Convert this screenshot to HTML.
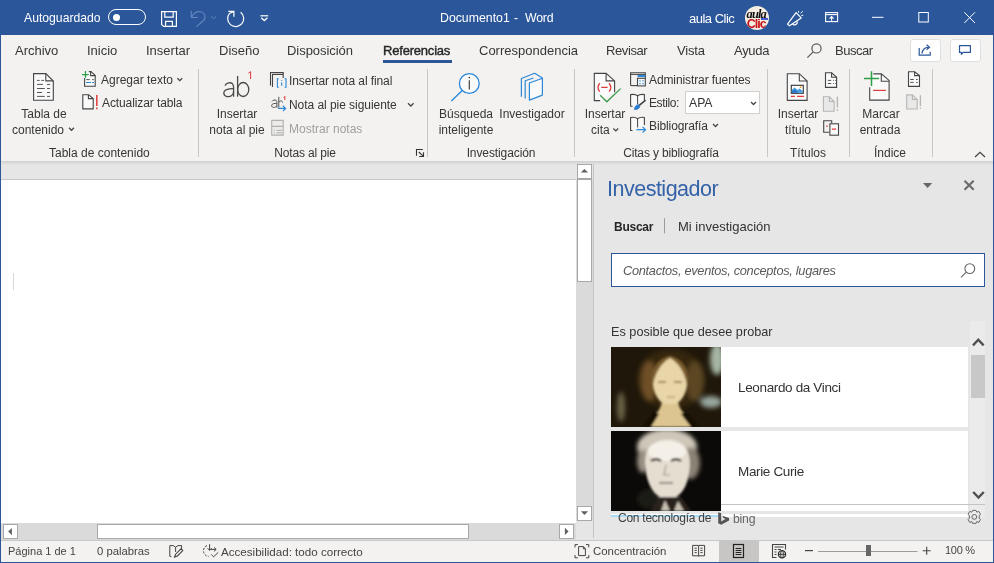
<!DOCTYPE html>
<html><head><meta charset="utf-8">
<style>
*{box-sizing:border-box;margin:0;padding:0}
html,body{width:994px;height:563px;overflow:hidden}
body{position:relative;background:#f3f2f1;font-family:"Liberation Sans",sans-serif;color:#444}
.a{position:absolute;white-space:nowrap}
#title{left:0;top:0;width:994px;height:35px;background:#2b579a;color:#fff}
.tab{position:absolute;top:43px;font-size:13px;color:#363636;line-height:16px;white-space:nowrap}
.rb{position:absolute;font-size:12px;color:#363636;line-height:14px;white-space:nowrap}
.c{text-align:center}
.sep{position:absolute;top:69px;width:1px;height:88px;background:#c8c6c4}
svg{position:absolute;overflow:visible}
body>div{will-change:transform}
</style></head><body>
<!-- title bar -->
<div class="a" id="title"></div>
<div class="a" style="left:24px;top:11px;color:#fff;font-size:12.2px;line-height:15px">Autoguardado</div>
<div class="a" style="left:108px;top:9px;width:38px;height:16px;border:1.3px solid #fff;border-radius:8px"></div>
<div class="a" style="left:112.5px;top:13.5px;width:7px;height:7px;border-radius:50%;background:#fff"></div>
<svg style="left:0;top:0" width="994" height="35" fill="none" stroke="#fff" stroke-width="1.2">
 <!-- save -->
 <path d="M161.6 11.6 H176.4 V26.4 H163.6 L161.6 24.4 Z"/>
 <path d="M164.8 11.6 V17.2 H173.2 V11.6"/>
 <path d="M165.6 26.4 V21.4 H172.4 V26.4"/>
 <!-- undo disabled -->
 <g stroke="#6384bd">
  <path d="M191.3 11 V17.5 H197.8"/>
  <path d="M191.8 17 C194 12.5 198 11 201.5 12 C205.5 13.5 206 18 203.5 20.5 L196.4 26.6"/>
  <path d="M210.8 16.2 L213.5 18.7 L216.3 16.2" stroke-width="1"/>
 </g>
 <!-- redo -->
 <path d="M240.6 12.3 A8 8 0 1 1 229.8 13.2"/>
 <path d="M228.3 11.4 H233.9 V16.8"/>
 <path d="M229.8 13.2 L233.6 11.6"/>
 <!-- customize -->
 <path d="M260.4 15.8 H268.2" />
 <path d="M261.2 17.8 L264.3 20.6 L267.4 17.8" stroke-width="1.3"/>
 <!-- megaphone -->
 <path d="M796.1 12.6 L801.2 17.9 L789.5 25.8 L787.5 24.1 Z" stroke-linejoin="round"/>
 <path d="M792.6 23.6 A2.3 2.3 0 0 0 796.8 21.3"/>
 <path d="M798.6 10.9 V12.6 M800.6 13.4 L802.8 11.2 M801.4 15.4 H803.2" stroke-width="1"/>
 <!-- ribbon display options -->
 <rect x="825.6" y="12.6" width="12" height="9" stroke-width="1.1"/>
 <path d="M825.6 14.6 H837.6" stroke-width="1.1"/>
 <path d="M831.6 20.8 V16.8 M829.6 18.6 L831.6 16.6 L833.6 18.6" stroke-width="1.1"/>
 <!-- minimize -->
 <path d="M872 17.3 H883.5" stroke-width="1"/>
 <!-- maximize -->
 <rect x="918.8" y="12.5" width="9.5" height="9.5" stroke-width="1"/>
 <!-- close -->
 <path d="M964.3 12.3 L975 23 M975 12.3 L964.3 23" stroke-width="1"/>
</svg>
<div class="a" style="left:439.5px;top:10.5px;color:#fff;font-size:12.3px;line-height:15px">Documento1</div>
<div class="a" style="left:513.7px;top:10.5px;color:#fff;font-size:12.3px;line-height:15px">-</div>
<div class="a" style="left:524.6px;top:10.5px;color:#fff;font-size:12.3px;line-height:15px;letter-spacing:-0.2px">Word</div>
<div class="a" style="left:689px;top:11px;color:#fff;font-size:13px;line-height:15px;letter-spacing:-0.5px">aula Clic</div>
<!-- avatar -->
<div class="a" style="left:745px;top:6px;width:24px;height:24px;border-radius:50%;background:#f4ede2;overflow:hidden">
 <div class="a" style="left:1.6px;top:1.5px;font-family:'Liberation Serif',serif;font-style:italic;font-weight:bold;font-size:12.5px;line-height:12px;color:#111;letter-spacing:-0.9px">aula</div>
 <div class="a" style="left:1.8px;top:11.5px;font-family:'Liberation Sans',sans-serif;font-weight:bold;font-size:12.5px;line-height:12px;color:#c8121c;letter-spacing:-1px">Clic</div>
 <div class="a" style="left:16px;top:12.2px;width:7px;height:1.6px;background:#4a55d0"></div>
</div>
<!-- tabs -->
<div class="tab" style="left:15px">Archivo</div>
<div class="tab" style="left:87.2px">Inicio</div>
<div class="tab" style="left:146.2px">Insertar</div>
<div class="tab" style="left:219.2px">Diseño</div>
<div class="tab" style="left:287.4px;letter-spacing:-0.05px">Disposición</div>
<div class="tab" style="left:383px;letter-spacing:-0.2px;color:#262626;-webkit-text-stroke:0.4px #262626">Referencias</div>
<div class="a" style="left:383px;top:60px;width:69px;height:3px;background:#2b579a"></div>
<div class="tab" style="left:479px">Correspondencia</div>
<div class="tab" style="left:606.3px;letter-spacing:-0.4px">Revisar</div>
<div class="tab" style="left:676.8px;letter-spacing:-0.2px">Vista</div>
<div class="tab" style="left:734px;letter-spacing:-0.3px">Ayuda</div>
<div class="tab" style="left:835px;letter-spacing:-0.5px">Buscar</div>
<svg style="left:0;top:35px" width="994" height="30" fill="none" stroke="#555" stroke-width="1.2">
 <circle cx="816.5" cy="13.4" r="4.6"/>
 <path d="M813.2 16.8 L807.4 22.6"/>
</svg>
<div class="a" style="left:909.5px;top:38.5px;width:31px;height:23px;background:#fff;border:1px solid #e1dfdd;border-radius:3px"></div>
<div class="a" style="left:949.5px;top:38.5px;width:31px;height:23px;background:#fff;border:1px solid #e1dfdd;border-radius:3px"></div>
<svg style="left:0;top:35px" width="994" height="30" fill="none" stroke="#2b579a" stroke-width="1.2">
 <path d="M919.2 13 V20.2 H930.2 V16.8"/>
 <path d="M922 18.5 C922.5 14 925 12.3 928.5 12.3"/>
 <path d="M926.6 9.8 L929.5 12.3 L926.6 14.8"/>
 <path d="M959.5 10.6 H970.4 V17.4 H963 L961.4 19.4 V17.4 H959.5 Z" stroke-linejoin="round"/>
</svg>
<!-- ribbon texts -->
<div class="rb c" style="left:-6px;width:100px;top:107px">Tabla de</div>
<div class="rb c" style="left:-12px;width:100px;top:122.5px">contenido</div>
<div class="rb c" style="left:49px;width:100px;top:145.5px">Tabla de contenido</div>
<div class="rb" style="left:101px;top:72.5px">Agregar texto</div>
<div class="rb" style="left:101.5px;top:95.5px;letter-spacing:-0.1px">Actualizar tabla</div>

<div class="rb c" style="left:186.7px;width:100px;top:107px">Insertar</div>
<div class="rb c" style="left:186.9px;width:100px;top:122.5px">nota al pie</div>
<div class="rb c" style="left:254.5px;width:100px;top:145.5px;letter-spacing:-0.15px">Notas al pie</div>
<div class="rb" style="left:289.4px;top:73.5px;letter-spacing:-0.1px">Insertar nota al final</div>
<div class="rb" style="left:289.4px;top:97.5px;letter-spacing:-0.05px">Nota al pie siguiente</div>
<div class="rb" style="left:289.4px;top:121.5px;color:#a19f9d">Mostrar notas</div>

<div class="rb c" style="left:416.3px;width:100px;top:107px">Búsqueda</div>
<div class="rb c" style="left:416.2px;width:100px;top:122.5px">inteligente</div>
<div class="rb c" style="left:481.8px;width:100px;top:107px">Investigador</div>
<div class="rb c" style="left:450.8px;width:100px;top:145.5px;letter-spacing:-0.1px">Investigación</div>

<div class="rb c" style="left:554.7px;width:100px;top:107px">Insertar</div>
<div class="rb" style="left:591px;top:122.5px">cita</div>
<div class="rb c" style="left:621.1px;width:100px;top:145.5px;letter-spacing:-0.15px">Citas y bibliografía</div>
<div class="rb" style="left:649.4px;top:73px;letter-spacing:-0.1px">Administrar fuentes</div>
<div class="rb" style="left:649px;top:95.7px;letter-spacing:-0.4px">Estilo:</div>
<div class="a" style="left:685px;top:91px;width:75px;height:23px;background:#fff;border:1px solid #d2d0ce"></div>
<div class="rb" style="left:688.7px;top:95.7px;color:#333;font-size:12.2px">APA</div>
<div class="rb" style="left:649px;top:118.7px;letter-spacing:-0.1px">Bibliografía</div>

<div class="rb c" style="left:747.5px;width:100px;top:107px">Insertar</div>
<div class="rb c" style="left:747.6px;width:100px;top:122.5px">título</div>
<div class="rb c" style="left:758.2px;width:100px;top:145.5px">Títulos</div>
<div class="rb c" style="left:830.8px;width:100px;top:107px">Marcar</div>
<div class="rb c" style="left:829.9px;width:100px;top:122.5px">entrada</div>
<div class="rb c" style="left:840.3px;width:100px;top:145.5px">Índice</div>

<!-- separators -->
<div class="sep" style="left:198px"></div>
<div class="sep" style="left:427px"></div>
<div class="sep" style="left:574px"></div>
<div class="sep" style="left:767px"></div>
<div class="sep" style="left:849px"></div>
<div class="sep" style="left:932px"></div>

<!-- ribbon icons -->
<svg style="left:0;top:0" width="994" height="170" fill="none" stroke="#444" stroke-width="1.1">
 <!-- chevrons -->
 <g stroke="#444" stroke-width="1.25">
  <path d="M69 127.8 L71.5 130.3 L74 127.8"/>
  <path d="M177.4 78.2 L179.8 80.7 L182.2 78.2"/>
  <path d="M408 103.2 L410.8 106 L413.6 103.2"/>
  <path d="M613.4 128.5 L615.8 130.9 L618.2 128.5"/>
  <path d="M751 102 L753.5 104.5 L756 102"/>
  <path d="M713 124 L715.5 126.5 L718 124"/>
  <path d="M975 157 L980 152.4 L985 157"/>
 </g>
 <!-- dialog launcher -->
 <path d="M416.5 155.8 V149.5 H422.8 M418.8 152 L423.2 156.2 M419.2 156.5 H423.5 V152.2" stroke="#333" stroke-width="1.1"/>

 <!-- TOC big icon -->
 <path d="M33.6 73.6 H45.8 L53.3 81 V100.3 H33.6 Z" fill="#fafafa" stroke-linejoin="miter"/>
 <path d="M45.8 73.6 V80.9 H53.3" />
 <g stroke="#555" stroke-width="1">
  <path d="M37 80.4 H39.7 M41.3 80.4 H44 M37 84.4 H42.9 M47 84.4 H50.1 M37 88.5 H44.8 M47 88.5 H50.1 M37 92.5 H42.1 M47 92.5 H50.1 M37 96.4 H44.8 M47 96.4 H50.1"/>
 </g>
 <!-- Agregar texto small icon -->
 <path d="M84.6 78 V86.3 H95.2 V75.4 L91 71.6 H88.8" fill="#fafafa"/>
 <path d="M90.6 71.6 V75.6 H95.2" />
 <path d="M82 74.6 H88.8 M85.5 71.1 V77.8" stroke="#2e9e47" stroke-width="1.3"/>
 <path d="M86.2 79.6 H89.8 M92.1 79.6 H93.8" stroke="#555" stroke-width="1"/>
 <path d="M86 82.5 H91 M92.1 82.5 H94" stroke="#2b88d8" stroke-width="1.2"/>
 <!-- Actualizar tabla small icon -->
 <path d="M82.8 94.7 H88.6 L93.2 98.6 V108.9 H82.8 Z" fill="#fafafa"/>
 <path d="M88.4 94.7 V98.6 H93.2"/>
 <path d="M96.8 95 V106" stroke="#e23b3b" stroke-width="1.5"/>
 <path d="M96.8 107.6 V109.2" stroke="#e23b3b" stroke-width="1.5"/>

 <!-- ab big -->
 <g stroke="#4a4a4a" stroke-width="1.3">
  <path d="M225 85.6 C226.5 82.8 230.5 82 232.3 83.6 C233.3 84.6 233.6 85.8 233.6 87.6 V96.7"/>
  <path d="M233.6 88.6 C229.5 88.6 223.8 89 223.8 93 C223.8 97.2 229.5 97.3 231.6 95.6 C233 94.4 233.6 93 233.6 91.4"/>
  <path d="M237.6 75.9 V96.7"/>
  <ellipse cx="243.2" cy="89.5" rx="5.6" ry="7"/>
 </g>
 <path d="M248.4 73.2 L250.6 71.6 V79" stroke="#e23b3b" stroke-width="1"/>

 <!-- Insertar nota al final -->
 <path d="M270.5 85.4 V72.5 H283.2 V74" stroke="#444" stroke-width="1.1"/>
 <path d="M272.5 87 V74.4 H283.2 V78" stroke="#444" stroke-width="1.1"/>
 <path d="M278.8 78.8 H277.4 V87.2 H278.8 M284.6 78.8 H286 V87.2 H284.6" stroke="#2b88d8" stroke-width="1.1"/>
 <path d="M281.7 80.3 V80.9 M281.7 82.5 V85.8" stroke="#2b88d8" stroke-width="1.2"/>
 <!-- Nota al pie siguiente -->
 <g stroke="#505050" stroke-width="1">
  <path d="M272 101.4 C272.8 100 275 99.6 276.2 100.4 C276.8 101 276.9 101.6 276.9 102.4 V107.6 M276.9 103.4 C274.7 103.4 271.6 103.4 271.6 105.6 C271.6 108 275.2 107.8 276.9 106"/>
  <path d="M278.8 96.8 V107.6 M278.8 102.2 C280 100.4 282.5 100.4 282.5 102.6"/>
 </g>
 <path d="M283.8 97.6 L284.8 96.4 V100" stroke="#e23b3b" stroke-width="1"/>
 <path d="M277.8 108.4 H285.6 M282.9 105.8 L285.6 108.4 L282.9 111" stroke="#2b88d8" stroke-width="1.2"/>
 <!-- Mostrar notas -->
 <path d="M271.7 120.4 H283.2 V135.1 H271.7 Z M271.7 126.4 H283.2" stroke="#b3b0ad" stroke-width="1.1" fill="#ebebeb"/>
 <path d="M273.8 130.4 H274.8 M276.4 130.4 H282 M273.8 132.8 H274.8 M276.4 132.8 H282" stroke="#b3b0ad" stroke-width="1"/>

 <!-- Busqueda inteligente -->
 <circle cx="469.3" cy="83.5" r="9.9" stroke="#2b88d8" stroke-width="1.3" fill="#fafafa"/>
 <path d="M462.2 90.6 L451.4 101.1" stroke="#2b88d8" stroke-width="1.4"/>
 <path d="M469.3 80.2 V89.6" stroke="#333" stroke-width="1.1"/>
 <circle cx="469.3" cy="77.6" r="0.8" fill="#333" stroke="none"/>
 <!-- Investigador books -->
 <g stroke="#2b88d8" stroke-width="1.2" stroke-linejoin="round">
  <path d="M521.4 96.8 V78.5 L534.6 73.3 L542.4 78"/>
  <path d="M525.2 98.4 V80.8 L533.5 78"/>
  <path d="M529.4 100.1 V83 L542.4 78.3 V95.1 Z" fill="#fafafa"/>
 </g>

 <!-- Insertar cita -->
 <path d="M600.1 100.6 H594.3 V73.4 H606.1 L614.6 80.9 V92.2" fill="#fafafa" stroke="#444"/>
 <path d="M606.1 73.4 V80.9 H614.6"/>
 <path d="M599.8 83.3 C597.6 85.8 597.6 89.2 599.8 91.6 M609 83.3 C611.2 85.8 611.2 89.2 609 91.6 M601.3 87.4 H607.6" stroke="#e23b3b" stroke-width="1.3"/>
 <path d="M600.2 95.3 L606.8 101.8 L620.6 88.6" stroke="#3a9a4a" stroke-width="1.3"/>
 <!-- Administrar fuentes -->
 <path d="M630.6 85.6 V72.7 H645.3 V78" stroke="#444" stroke-width="1.1"/>
 <path d="M630.6 74.4 H645.3" stroke="#444" stroke-width="1"/>
 <path d="M637.6 76 H645.3" stroke="#2b88d8" stroke-width="2"/>
 <path d="M630.6 85.6 H637" stroke="#444" stroke-width="1.1"/>
 <rect x="637.5" y="78.3" width="7.8" height="7.6" stroke="#444" stroke-width="1.1" fill="#fafafa"/>
 <path d="M639.4 80.8 H640.6 M642.3 80.8 H643.6 M639.4 83.6 H640.6 M642.3 83.6 H643.6" stroke="#2b88d8" stroke-width="1.3"/>
 <!-- Estilo book -->
 <path d="M632.6 106.2 H630.6 V94.6 C633 94.2 636 94.6 637.6 95.8 C639.2 94.6 642 94.2 644.4 94.6 V100.6" stroke="#444" stroke-width="1.1" fill="#fafafa"/>
 <path d="M637.6 95.8 V104" stroke="#444" stroke-width="1"/>
 <path d="M634.4 109.5 C634.8 106.6 636.2 105 638.2 104.6 L640 106.4 C639.6 108.4 637.2 109.6 634.4 109.5 Z" fill="#2b7cd3" stroke="#2b7cd3" stroke-width="0.8"/>
 <path d="M639.2 105.4 L645.6 100.2" stroke="#444" stroke-width="1.6"/>
 <!-- Bibliografia book -->
 <path d="M632.6 130.5 H630.6 V117.5 C633 117.1 636 117.5 637.6 118.7 C639.2 117.5 642 117.1 644.4 117.5 V125" stroke="#444" stroke-width="1.1" fill="#fafafa"/>
 <path d="M637.6 118.7 V127.5" stroke="#444" stroke-width="1"/>
 <path d="M636.4 129.7 H645.4 M642.6 126.8 L645.5 129.7 L642.6 132.6" stroke="#2b88d8" stroke-width="1.2"/>

 <!-- Insertar titulo big -->
 <path d="M787.3 73.7 H799.3 L807.1 81 V100.4 H787.3 Z" fill="#fafafa"/>
 <path d="M799.3 73.7 V81 H807.1"/>
 <rect x="791.3" y="85.3" width="12" height="8" stroke="#333" stroke-width="1.1" fill="#fff"/>
 <path d="M791.8 92.8 V89.8 L794.6 87.4 L797.6 90 L799.6 88.6 L802.8 91 V92.8 Z" fill="#4a9ee0" stroke="none"/>
 <path d="M791.8 92.8 V91.4 L795 89.6 L798.4 92.8 Z" fill="#2a70c0" stroke="none"/>
 <circle cx="800.6" cy="87.2" r="0.9" fill="#f0a030" stroke="none"/>
 <path d="M790.9 96.4 H794.9 M797.1 96.4 H803.9" stroke="#e23b3b" stroke-width="1.1"/>
 <!-- small titulos icons -->
 <path d="M825.5 72.8 H831.6 L836.6 77.3 V87.4 H825.5 Z" fill="#fafafa"/>
 <path d="M831.6 72.8 V77.3 H836.6"/>
 <path d="M827.8 80.4 H831.2 M833 80.4 H833.8 M835 80.4 H835.8 M827.8 83.5 H831.2 M833 83.5 H833.8 M835 83.5 H835.8" stroke="#555" stroke-width="1"/>
 <path d="M823.4 96.8 H829.4 L834.2 101.5 V111.2 H823.4 Z" fill="#e8e8e8" stroke="#b8b6b4"/>
 <path d="M829.4 96.8 V101.5 H834.2" stroke="#b8b6b4"/>
 <path d="M837.4 96.5 V107.5 M837.4 109.2 V111" stroke="#b8b6b4" stroke-width="1.4"/>
 <path d="M829 132.2 H823.7 V120.7 H831.7 V123" fill="none"/>
 <rect x="829.9" y="123.8" width="8.6" height="11.4" fill="#fafafa"/>
 <path d="M826.2 126.1 H827.8 M831.9 129.1 H836.1" stroke="#e23b3b" stroke-width="1.1"/>

 <!-- Marcar entrada big -->
 <path d="M873.3 73.9 H881.3 L889.1 80.4 V100.1 H869.7 V87.3" fill="#fafafa"/>
 <path d="M881.3 73.9 V81.3 H889.1"/>
 <path d="M864 78.4 H879.1 M871.5 71.2 V86" stroke="#2e9e47" stroke-width="1.5"/>
 <path d="M873.1 90.4 H885.9" stroke="#e23b3b" stroke-width="1.2"/>
 <!-- small indice icons -->
 <path d="M908.5 71.7 H914.6 L919.5 75.6 V86.4 H908.5 Z" fill="#fafafa"/>
 <path d="M914.6 71.7 V75.6 H919.5"/>
 <path d="M910.2 79.5 H913.7 M916 79.5 H917.7 M910.2 82.4 H913.7 M916 82.4 H917.7" stroke="#555" stroke-width="1"/>
 <path d="M906.7 94.9 H912.4 L917.2 99.4 V109 H906.7 Z" fill="#e8e8e8" stroke="#b8b6b4"/>
 <path d="M912.4 94.9 V99.4 H917.2" stroke="#b8b6b4"/>
 <path d="M920.4 95.3 V106 M920.4 107.4 V108.8" stroke="#b8b6b4" stroke-width="1.4"/>
</svg>
<!-- doc area -->
<div class="a" style="left:0;top:161px;width:994px;height:379px;background:#e6e6e6"></div>
<div class="a" style="left:0;top:161px;width:994px;height:4px;background:linear-gradient(#cfcfcf,#e6e6e6)"></div>
<div class="a" style="left:0;top:179px;width:576px;height:1px;background:#c8c8c8"></div>
<div class="a" style="left:0;top:180px;width:576px;height:343px;background:#fff"></div>
<div class="a" style="left:13px;top:273px;width:1px;height:17px;background:#d8d8d8"></div>
<!-- vertical scrollbar -->
<div class="a" style="left:576px;top:179px;width:17px;height:342px;background:#dadada"></div>
<div class="a" style="left:577px;top:164px;width:15px;height:15px;background:#fff;border:1px solid #a8a8a8"></div>
<div class="a" style="left:577px;top:178.5px;width:15px;height:102.5px;background:#fff;border:1.5px solid #a8a8a8"></div>
<div class="a" style="left:577px;top:506px;width:15px;height:15px;background:#fff;border:1px solid #a8a8a8"></div>
<div class="a" style="left:593px;top:164px;width:1px;height:374px;background:#c4c4c4"></div>
<!-- horizontal scrollbar -->
<div class="a" style="left:1px;top:523px;width:575px;height:17px;background:#dadada"></div>
<div class="a" style="left:3px;top:524px;width:15px;height:15px;background:#fff;border:1px solid #a8a8a8"></div>
<div class="a" style="left:97px;top:524px;width:372px;height:15px;background:#fff;border:1.3px solid #a8a8a8"></div>
<div class="a" style="left:559px;top:524px;width:15px;height:15px;background:#fff;border:1px solid #a8a8a8"></div>
<svg style="left:0;top:0" width="994" height="563" stroke="none" fill="#606060">
 <path d="M584.4 168.9 L588.1 172.6 H580.9 Z"/>
 <path d="M580.9 511.3 H588.1 L584.4 515 Z"/>
 <path d="M8.2 531.6 L11.9 527.9 V535.3 Z"/>
 <path d="M568.6 531.4 L564.9 527.7 V535.1 Z"/>
</svg>
<!-- panel -->
<div class="a" style="left:607.3px;top:176.8px;font-size:21.5px;line-height:24px;color:#3462a8;letter-spacing:-0.5px">Investigador</div>
<svg style="left:0;top:0" width="994" height="563" fill="none">
 <path d="M923 183 H932.2 L927.6 188 Z" fill="#666"/>
 <path d="M964.5 180.8 L973.7 189.8 M973.7 180.8 L964.5 189.8" stroke="#6a6a6a" stroke-width="2.1"/>
 <path d="M664.5 218.3 V233.4" stroke="#9a9a9a" stroke-width="1"/>
</svg>
<div class="a" style="left:613.5px;top:220px;font-size:12px;line-height:14px;font-weight:bold;color:#262626;letter-spacing:-0.25px">Buscar</div>
<div class="a" style="left:677.9px;top:218.5px;font-size:13px;line-height:15px;color:#333">Mi investigación</div>
<div class="a" style="left:611px;top:252.5px;width:374px;height:33.5px;background:#fff;border:1.2px solid #2b579a"></div>
<div class="a" style="left:622.5px;top:262.5px;font-size:12.8px;line-height:15px;font-style:italic;color:#5a5a5a;letter-spacing:-0.3px">Contactos, eventos, conceptos, lugares</div>
<svg style="left:0;top:0" width="994" height="563" fill="none" stroke="#666" stroke-width="1.1">
 <circle cx="969.8" cy="268.6" r="4.9"/>
 <path d="M966.2 272.2 L961 277.4"/>
</svg>
<div class="a" style="left:611px;top:324.5px;font-size:12.7px;line-height:14px;color:#333">Es posible que desee probar</div>
<!-- list -->
<div class="a" style="left:970px;top:321px;width:15px;height:196px;background:#ebebeb"></div>
<div class="a" style="left:971px;top:355px;width:14px;height:42.5px;background:#c8c8c8"></div>
<svg style="left:0;top:0" width="994" height="563" fill="none" stroke="#505050" stroke-width="2.4">
 <path d="M973 345.4 L978.3 339.8 L983.6 345.4"/>
 <path d="M973.2 492 L978.5 497.6 L983.8 492"/>
</svg>
<div class="a" style="left:611px;top:347px;width:357px;height:80px;background:#fff"></div>
<div class="a" style="left:611px;top:430.5px;width:357px;height:74px;background:#fff"></div>
<div class="a" style="left:611px;top:504px;width:374px;height:1px;background:#c4c4c4"></div>
<div class="a" style="left:611px;top:505px;width:357px;height:6px;background:#fff"></div>
<div class="a" style="left:611px;top:514.4px;width:357px;height:2.6px;background:#fff"></div>
<div class="a" style="left:737.5px;top:380px;font-size:13.5px;line-height:15px;color:#333;letter-spacing:-0.35px">Leonardo da Vinci</div>
<div class="a" style="left:737.5px;top:463.8px;font-size:13.5px;line-height:15px;color:#333;letter-spacing:-0.35px">Marie Curie</div>
<!-- portraits -->
<svg style="left:611px;top:347px" width="110" height="80" viewBox="0 0 110 80">
 <defs>
  <filter id="b1" x="-30%" y="-30%" width="160%" height="160%"><feGaussianBlur stdDeviation="2.5"/></filter>
  <filter id="b2" x="-30%" y="-30%" width="160%" height="160%"><feGaussianBlur stdDeviation="0.9"/></filter>
  <clipPath id="c1"><rect width="110" height="80"/></clipPath>
 </defs>
 <g clip-path="url(#c1)">
 <rect width="110" height="80" fill="#1f170a"/>
 <g filter="url(#b1)">
  <ellipse cx="106" cy="12" rx="7" ry="16" fill="#a6b6a4"/>
  <ellipse cx="100" cy="55" rx="11" ry="6" fill="#98a69e"/>
  <ellipse cx="10" cy="60" rx="4" ry="15" fill="#6c6648"/>
  <ellipse cx="60" cy="32" rx="34" ry="30" fill="#36260f"/>
  <ellipse cx="84" cy="34" rx="9" ry="20" fill="#5c4622"/>
  <ellipse cx="38" cy="34" rx="8" ry="20" fill="#6e5026"/>
 </g>
 <g filter="url(#b2)">
  <path d="M51 54 H67 C68 62 72 66 80 72 L86 80 H34 L40 72 C46 66 50 62 51 54 Z" fill="#dcc590"/>
  <path d="M32 80 L44 65 L48 67 L40 80 Z M88 80 L74 65 L70 67 L80 80 Z" fill="#120c04"/>
  <path d="M59 9 C52 11 44 16 42 26 C40 38 44 50 50 55 C54 58 64 58 68 55 C74 50 78 38 76 26 C74 16 66 11 59 9 Z" fill="#e8d5a8"/>
  <path d="M59 9 C52 10 44 15 42 26 C41 30 41 34 42 38 C44 26 50 16 59 11 Z" fill="#7a5a2c"/>
  <path d="M59 9 C66 10 74 15 76 26 C77 30 77 34 76 38 C74 26 68 16 59 11 Z" fill="#7a5a2c"/>
  <path d="M47 35 H55 M63 35 H71" stroke="#8a6c40" stroke-width="1.3"/>
  <path d="M56 50 H64" stroke="#a88a5a" stroke-width="1"/>
 </g>
 </g>
</svg>
<svg style="left:611px;top:430.5px" width="110" height="80" viewBox="0 0 110 80">
 <defs>
  <filter id="b3" x="-30%" y="-30%" width="160%" height="160%"><feGaussianBlur stdDeviation="2.2"/></filter>
  <filter id="b4" x="-30%" y="-30%" width="160%" height="160%"><feGaussianBlur stdDeviation="0.9"/></filter>
  <clipPath id="c2"><rect width="110" height="80"/></clipPath>
 </defs>
 <g clip-path="url(#c2)">
 <rect width="110" height="80" fill="#0c0a08"/>
 <g filter="url(#b3)">
  <ellipse cx="56" cy="16" rx="30" ry="18" fill="#cfc8ba"/>
  <ellipse cx="80" cy="32" rx="9" ry="16" fill="#8a8274"/>
  <ellipse cx="32" cy="30" rx="6" ry="12" fill="#9a9284"/>
  <ellipse cx="40" cy="68" rx="14" ry="10" fill="#1e1a16"/>
 </g>
 <g filter="url(#b4)">
  <path d="M34 32 C34 16 44 8 57 8 C70 8 80 18 79 34 C78 54 70 68 57 68 C44 68 35 54 34 32 Z" fill="#e4ddd0"/>
  <ellipse cx="56" cy="20" rx="19" ry="10" fill="#f4f0e8"/>
  <path d="M40 30 C43 28 47 28 50 30 M60 30 C63 28 67 28 70 30" stroke="#3a332a" stroke-width="2.4" fill="none"/>
  <path d="M55 34 L53 44 H59" stroke="#a0968a" stroke-width="1.2" fill="none"/>
  <path d="M48 52 H62" stroke="#7a7062" stroke-width="1.6"/>
  <path d="M40 80 L47 66 H70 L80 80 Z" fill="#2a241e"/>
  <path d="M50 80 L54 69 L59 80 Z M63 80 L67 70 L73 80 Z" fill="#c8c0b2"/>
 </g>
 </g>
</svg>
<div class="a" style="left:611px;top:515px;width:110px;height:1.5px;background:#a8dcf4"></div>
<div class="a" style="left:617.5px;top:511px;font-size:12px;line-height:14px;color:#3e3e3e;letter-spacing:-0.25px">Con tecnología de</div>
<svg style="left:0;top:0" width="994" height="563">
 <path d="M718.2 512.2 L721.2 513.2 V521.4 L725.4 519 L723.2 517.8 L722.2 515.8 L729.1 518.1 V520.6 L721.2 524.8 L718.2 523.2 Z" fill="#555"/>
 <g fill="none" stroke="#666" stroke-width="1">
  <circle cx="974.3" cy="516.9" r="2.4"/>
  <path d="M972.6 510.4 H976 L976.8 512.2 L978.8 511.4 L980.5 514.2 L979.2 515.8 V518 L980.5 519.6 L978.8 522.4 L976.8 521.6 L976 523.4 H972.6 L971.8 521.6 L969.8 522.4 L968.1 519.6 L969.4 518 V515.8 L968.1 514.2 L969.8 511.4 L971.8 512.2 Z" stroke-linejoin="round"/>
 </g>
</svg>
<div class="a" style="left:732.6px;top:511.5px;font-size:12.2px;line-height:14px;color:#666;letter-spacing:-0.2px">bing</div>
<!-- status bar -->
<div class="a" style="left:0;top:540px;width:994px;height:1px;background:#c8c8c8"></div>
<div class="a" style="left:0;top:541px;width:994px;height:22px;background:#f3f2f1"></div>
<div class="a" style="left:719px;top:541px;width:40px;height:21px;background:#c8c6c4"></div>
<div class="a" style="left:8px;top:545px;font-size:11px;line-height:13px;color:#444">Página 1 de 1</div>
<div class="a" style="left:96.6px;top:545px;font-size:11.3px;line-height:13px;color:#444">0 palabras</div>
<div class="a" style="left:221.3px;top:545px;font-size:11.6px;line-height:13px;color:#444">Accesibilidad: todo correcto</div>
<div class="a" style="left:592.7px;top:545px;font-size:11.4px;line-height:13px;color:#444">Concentración</div>
<div class="a" style="left:944.5px;top:544px;font-size:11px;line-height:13px;color:#444;letter-spacing:-0.3px">100 %</div>
<svg style="left:0;top:0" width="994" height="563" fill="none" stroke="#444" stroke-width="1">
 <!-- proofing -->
 <path d="M171.4 556.4 H169.8 V545.6 H173.2 L175.6 547.2 L178 545.6 H181.6 V549.4"/>
 <path d="M175.6 547.2 V552"/>
 <path d="M174.6 557 L175.6 554.2 L181 548.8 L182.8 550.6 L177.4 556 Z" stroke-width="1.1"/>
 <!-- accessibility -->
 <path d="M207 545.6 A5.6 5.6 0 0 0 208.6 556.4" stroke-dasharray="2.2 1.3"/>
 <path d="M209.6 544.2 V550.2 M207.6 548.2 L209.6 550.4 L211.6 548.2" />
 <path d="M210.6 549.4 H216 M214 547.4 L216.2 549.4 L214 551.4"/>
 <path d="M211.2 554.4 L213.6 556.8 L218.2 552.4"/>
 <!-- focus -->
 <path d="M575 547.4 V544.6 H577.8 M586 544.6 H588.8 V547.4 M588.8 555 V557.8 H586 M577.8 557.8 H575 V555"/>
 <path d="M578.6 555.6 V546.6 H583.4 L585.4 548.6 V555.6 Z"/>
 <path d="M583.4 546.6 V548.8 H585.4"/>
 <!-- read mode -->
 <path d="M692.6 545.4 H698.2 L698.6 546 L699 545.4 H704.6 V555.8 H699 L698.6 556.4 L698.2 555.8 H692.6 Z"/>
 <path d="M698.6 546 V555.8"/>
 <path d="M694.6 548.2 H696.8 M694.6 550.4 H696.8 M694.6 552.6 H696.8 M700.4 548.2 H702.6 M700.4 550.4 H702.6 M700.4 552.6 H702.6"/>
 <!-- print layout -->
 <rect x="733.5" y="544.5" width="10" height="13" stroke="#222" stroke-width="1.2"/>
 <path d="M735.6 548.5 H741.4 M735.6 550.5 H741.4 M735.6 552.5 H741.4 M735.6 554.5 H741.4" stroke="#222" stroke-width="1"/>
 <!-- web layout -->
 <path d="M776.5 557.5 H772.5 V544.5 H785.5 V549.5" stroke-width="1.1"/>
 <path d="M774.5 547 H783.5 M774.5 549.5 H776.5 M777.8 549.5 H781 M774.5 552 H776.5 M774.5 554.5 H776.5" stroke-width="1"/>
 <circle cx="782" cy="554.3" r="3.6" fill="#f3f2f1" stroke="#333" stroke-width="1.3"/>
 <path d="M778.6 554.3 H785.4" stroke="#333" stroke-width="1"/>
 <ellipse cx="782" cy="554.3" rx="1.4" ry="3.6" stroke="#333" stroke-width="0.9"/>
 <!-- zoom -->
 <path d="M805 550.6 H813" stroke="#444" stroke-width="1.2"/>
 <path d="M818 551.5 H917.5" stroke="#9b9b9b" stroke-width="1"/>
 <rect x="866" y="545" width="5" height="11" fill="#666" stroke="none"/>
 <path d="M922.7 550.8 H930.7 M926.7 546.8 V554.8" stroke="#444" stroke-width="1.1"/>
</svg>
<!-- window border -->
<div class="a" style="left:0;top:0;width:1px;height:563px;background:#2b579a"></div>
<div class="a" style="left:993px;top:0;width:1px;height:563px;background:#2b579a"></div>
<div class="a" style="left:0;top:562px;width:994px;height:1px;background:#2b579a"></div>
</body></html>
